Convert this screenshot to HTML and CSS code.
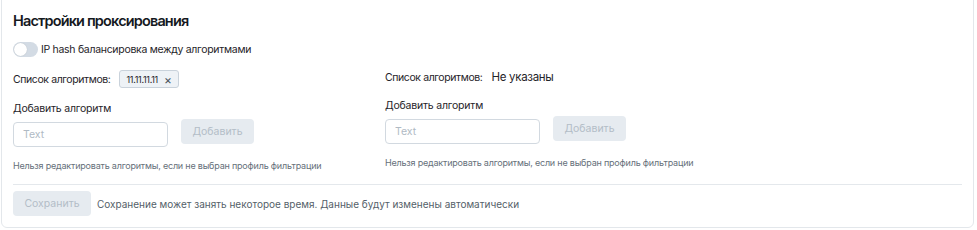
FILE: index.html
```html
<!DOCTYPE html>
<html lang="ru">
  <head>
    <meta charset="UTF-8" />
    <meta name="viewport" content="width=device-width, initial-scale=1.0" />
    <title>Настройки проксирования</title>
    <link rel="stylesheet" href="styles.css">
  </head>
  <body>
    <div class="card">
      <h2 class="title">Настройки проксирования</h2>
      <label class="switch">
        <span class="track"><span class="knob"></span></span>
        <span>IP hash балансировка между алгоритмами</span>
      </label>
      <div class="columns">
        <div class="col">
          <div class="list">
            <span>Список алгоритмов:</span>
            <span class="tag">11.11.11.11 <span class="tag-x">×</span></span>
          </div>
          <div class="label">Добавить алгоритм</div>
          <div class="add-row">
            <input class="inp" type="text" placeholder="Text" />
            <button class="btn btn-add" disabled>Добавить</button>
          </div>
          <div class="hint">Нельзя редактировать алгоритмы, если не выбран профиль фильтрации</div>
        </div>
        <div class="col">
          <div class="list">
            <span>Список алгоритмов:</span>
            <span class="empty">Не указаны</span>
          </div>
          <div class="label">Добавить алгоритм</div>
          <div class="add-row">
            <input class="inp" type="text" placeholder="Text" />
            <button class="btn btn-add" disabled>Добавить</button>
          </div>
          <div class="hint">Нельзя редактировать алгоритмы, если не выбран профиль фильтрации</div>
        </div>
      </div>
      <hr class="divider" />
      <div class="footer">
        <button class="btn btn-save" disabled>Сохранить</button>
        <span class="note">Сохранение может занять некоторое время. Данные будут изменены автоматически</span>
      </div>
    </div>
  </body>
</html>
```

FILE: styles.css
```css
* {
  margin: 0;
  padding: 0;
  box-sizing: border-box;
}
body {
  font-family: Inter, "Noto Sans", sans-serif;
  color: #1f2429;
  background: #fff;
  padding: 0 3px 0 1px;
}
.card {
  margin-top: -8px;
  border: 1px solid #e3e7eb;
  border-radius: 6px;
  padding: 18px 11px 10px;
  height: 236px;
}
.title {
  font-size: 14.5px;
  font-weight: 600;
  letter-spacing: -0.85px;
  line-height: 19px;
  color: #15191e;
}
.switch {
  display: flex;
  align-items: center;
  gap: 3px;
  margin-top: 12px;
  font-size: 10.5px;
  letter-spacing: -0.3px;
  line-height: 15px;
}
.track {
  width: 25px;
  height: 15px;
  border-radius: 8px;
  background: #d3dbe4;
  display: flex;
  align-items: center;
  padding-left: 1px;
}
.knob {
  width: 13px;
  height: 13px;
  border-radius: 50%;
  background: #fff;
  box-shadow: 0 0 1px rgba(0, 0, 0, 0.2);
}
.columns {
  display: grid;
  grid-template-columns: 372px 1fr;
  align-items: start;
  margin-top: 13px;
}
.list {
  display: flex;
  align-items: center;
  gap: 9px;
  font-size: 10.5px;
  letter-spacing: -0.4px;
}
.tag {
  display: inline-flex;
  align-items: center;
  gap: 6px;
  height: 18px;
  padding: 0 6px;
  background: #eef2f6;
  border: 1px solid #c9d2db;
  border-radius: 3px;
  font-size: 9px;
  letter-spacing: -0.3px;
}
.tag-x {
  font-size: 12px;
  color: #4b545d;
}
.empty {
  font-size: 11.5px;
  letter-spacing: -0.3px;
  line-height: 15px;
}
.label {
  margin-top: 14px;
  font-size: 10.5px;
  letter-spacing: -0.2px;
  line-height: 14px;
}
.add-row {
  display: flex;
  align-items: flex-start;
  gap: 13px;
  margin-top: 3px;
}
.inp {
  width: 155px;
  height: 25px;
  margin-top: 3px;
  border: 1px solid #d2d9e0;
  border-radius: 4px;
  padding: 0 9px;
  font-family: inherit;
  font-size: 10.5px;
  outline: none;
}
.inp::placeholder {
  color: #b0bac4;
}
.btn {
  height: 25px;
  border: none;
  border-radius: 4px;
  background: #e6ebf0;
  color: #b3bdc7;
  font-family: inherit;
  font-size: 10.5px;
}
.btn-add {
  width: 73px;
}
.hint {
  margin-top: 13px;
  font-size: 9px;
  letter-spacing: -0.2px;
  line-height: 12px;
  color: #66707a;
}
.divider {
  border: none;
  border-top: 1px solid #e4e8ec;
  margin: 12px 0 6px;
}
.footer {
  display: flex;
  align-items: center;
  gap: 6px;
}
.btn-save {
  width: 78px;
}
.note {
  font-size: 10px;
  color: #555f69;
}
```
